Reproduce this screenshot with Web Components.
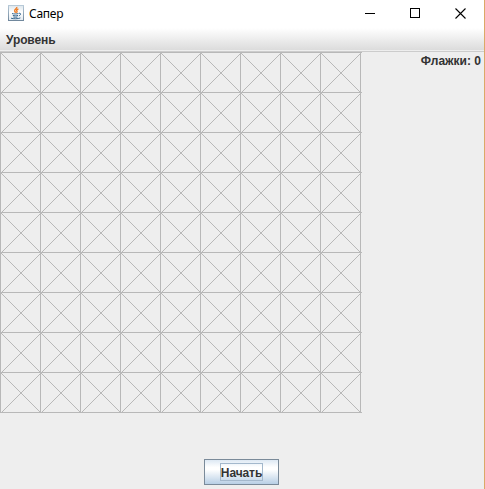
<!DOCTYPE html>
<html lang="ru"><head><meta charset="utf-8"><title>Сапер</title>
<style>html,body{margin:0;height:100%;overflow:hidden;background:#eee}</style></head>
<body><mine-window></mine-window>
<script>
class Base extends HTMLElement{
  constructor(){super();this.attachShadow({mode:'open'}).innerHTML=this.view();}
}
customElements.define('java-icon',class extends Base{view(){return `<style>:host{display:block;width:16px;height:16px}svg{display:block}</style>
<svg width="16" height="16" viewBox="0 0 16 16" fill="none"><defs><linearGradient id="g" x2="0" y2="1"><stop stop-color="#b8cad8"/><stop offset="1" stop-color="#71889d"/></linearGradient><linearGradient id="b" x2="0" y2="1"><stop stop-color="#dce6ed"/><stop offset=".45" stop-color="#fff"/><stop offset="1" stop-color="#e3eaf0"/></linearGradient></defs>
<rect x=".5" y=".5" width="15" height="15" fill="url(#b)" stroke="url(#g)"/>
<path d="M8.8 2C9.2 3.8 6.2 4.3 6.7 6c.2.7.8 1.2 1 1.8M10.4 4C8.2 4.6 8.5 5.6 9 6.2c.3.5 0 1-.6 1.5" stroke="#ee7a22" stroke-width="1.4"/>
<path d="M4 8.5c1.5.6 4.8.6 6.3.1M4.8 10.4c1.5.5 3.7.5 5.2 0M5.3 12c1.3.3 3 .3 4.2 0M10.8 8.3c2.6-.6 2.2 1.8.1 2.5M3 13.2c2.4.8 7 .8 9.4-.3" stroke="#39688f" stroke-width="1"/></svg>`}});
customElements.define('title-bar',class extends Base{view(){return `<style>:host{display:flex;align-items:center;box-sizing:border-box;height:28px;padding:0 18px 2px 8px;background:#fff;font:12px/16px "Noto Sans","Open Sans",sans-serif;color:#000}
.t{margin-left:5px;padding-top:2px;flex:1;letter-spacing:-.25px}.c{display:flex;gap:35px}svg{display:block}</style>
<java-icon></java-icon><span class="t"><slot></slot></span>
<div class="c"><svg width="10" height="11" shape-rendering="crispEdges"><path d="M0 5.5h10" stroke="#000"/></svg><svg width="10" height="11" shape-rendering="crispEdges"><path d="M.5 .5h9v9h-9z" fill="none" stroke="#000"/></svg><svg width="11" height="11"><path d="M.5 .5l10 10M10.5 .5l-10 10" stroke="#000" stroke-width="1.1"/></svg></div>`}});
customElements.define('menu-bar',class extends Base{view(){return `<style>:host{display:flex;box-sizing:border-box;height:24px;padding:4px 6px 0;background:linear-gradient(#eee,#eee) 0 100%/100% 1px no-repeat padding-box,linear-gradient(#fff,#dadada) padding-box;border-bottom:1px solid #ccc;font:bold 12px/16px "Liberation Sans",Arial,sans-serif;letter-spacing:-.1px;color:#333}</style><slot></slot>`}});
customElements.define('mine-field',class extends Base{view(){
  let cells='',lines='';
  for(let i=0;i<10;i++)lines+=`M${i*40+.5} 0v361M0 ${i*40+.5}h362`;
  for(let r=0;r<9;r++)for(let c=0;c<9;c++){const x=c*40,y=r*40;cells+=`M${x} ${y}l41 41M${x+42} ${y}l-41 41`;}
  return `<style>:host{display:block;width:362px;height:361px}svg{display:block}</style><svg width="362" height="361" shape-rendering="crispEdges" fill="none" stroke="#b8b8b8"><path d="${lines}"/><path d="${cells}"/></svg>`}});
customElements.define('flag-count',class extends Base{view(){return `<style>:host{display:block;font:bold 12px/16px "Liberation Sans",Arial,sans-serif;color:#333;white-space:nowrap}</style><slot></slot>`}});
customElements.define('metal-button',class extends Base{view(){return `<style>:host{display:block}button{display:flex;align-items:center;justify-content:center;box-sizing:border-box;width:75px;height:26px;padding:0;border:1px solid #7a8a99;border-radius:0;background:linear-gradient(#dde8f3,#fff 30%,#fff 40%,#b8cfe5);font:bold 12px/16px "Liberation Sans",Arial,sans-serif;color:#333}
span{box-sizing:border-box;width:43px;height:18px;padding-top:1px;border:1px solid #a3b8cc;display:flex;justify-content:center;white-space:nowrap;letter-spacing:-.1px}</style><button><span><slot></slot></span></button>`}});
customElements.define('mine-window',class extends Base{view(){return `<style>:host{display:flex;flex-direction:column;box-sizing:border-box;width:485px;height:489px;border-right:1px solid #dba967;background:#eee}
main{display:flex;justify-content:space-between;flex:1}flag-count{padding:1px 3px 0 0}footer{display:flex;justify-content:center;padding:0 1px 4px 0}</style>
<title-bar>Сапер</title-bar><menu-bar>Уровень</menu-bar><main><mine-field></mine-field><flag-count>Флажки: 0</flag-count></main><footer><metal-button>Начать</metal-button></footer>`}});
</script></body></html>
